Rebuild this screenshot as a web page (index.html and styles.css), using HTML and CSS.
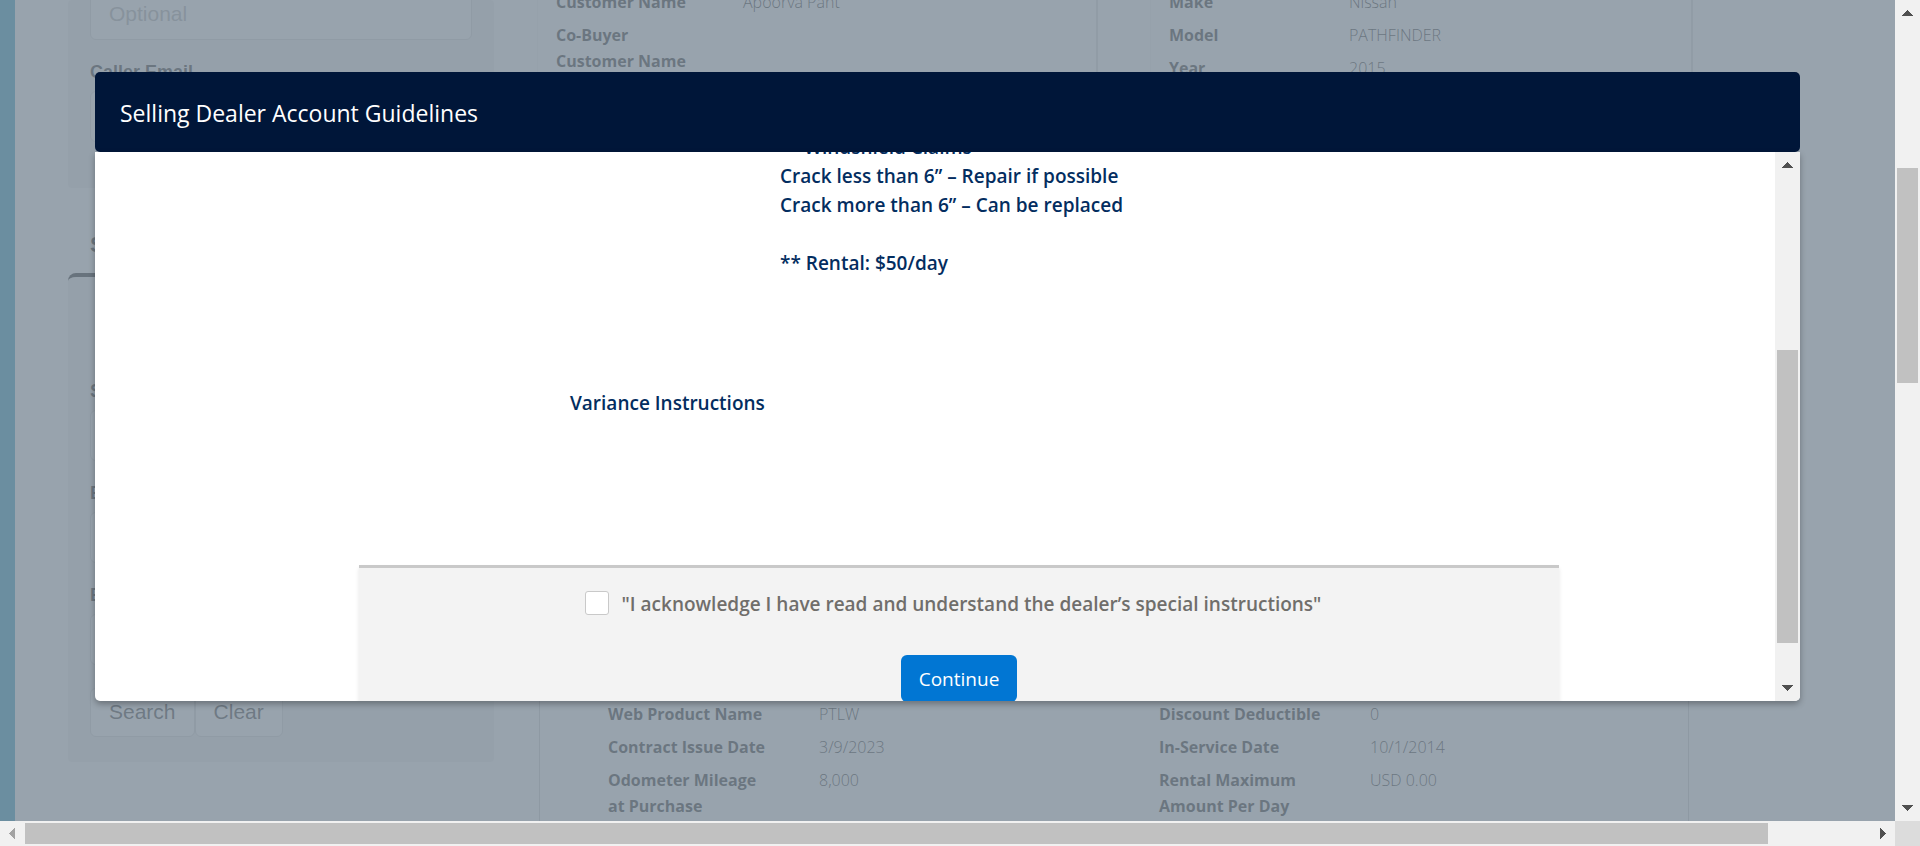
FILE: index.html
```html
<!DOCTYPE html>
<html lang="en">
<head>
<meta charset="utf-8">
<title>Selling Dealer Account Guidelines</title>
<link rel="stylesheet" href="styles.css">
</head>
<body>
<div class="window">
  <div class="viewport">
    <main class="page">
      <aside class="sidebar">
        <form class="panel panel-caller">
          <input class="field" type="text" aria-label="Caller phone" placeholder="Optional">
          <label class="label" for="email">Caller Email</label>
          <input class="field" id="email" type="text">
        </form>
        <h2 class="side-title">Search</h2>
        <form class="panel panel-search">
          <label class="label" for="s1">Search By</label>
          <input class="field" id="s1" type="text">
          <label class="label" for="s2">Enter Contract</label>
          <input class="field" id="s2" type="text">
          <label class="label" for="s3">Enter VIN</label>
          <input class="field" id="s3" type="text">
          <div class="buttons"><button type="button" class="plain">Search</button><button type="button" class="plain">Clear</button></div>
        </form>
      </aside>
      <section class="content">
        <div class="cards">
          <dl class="card card-customer">
            <div class="row"><dt>Customer Name</dt><dd>Apoorva Pant</dd></div>
            <div class="row"><dt>Co-Buyer Customer Name</dt><dd></dd></div>
          </dl>
          <dl class="card card-vehicle">
            <div class="row"><dt>Make</dt><dd>Nissan</dd></div>
            <div class="row"><dt>Model</dt><dd>PATHFINDER</dd></div>
            <div class="row"><dt>Year</dt><dd>2015</dd></div>
          </dl>
        </div>
        <div class="contract">
          <dl class="column">
            <div class="row"><dt>Web Product Name</dt><dd>PTLW</dd></div>
            <div class="row"><dt>Contract Issue Date</dt><dd>3/9/2023</dd></div>
            <div class="row"><dt>Odometer Mileage at Purchase</dt><dd>8,000</dd></div>
          </dl>
          <dl class="column">
            <div class="row"><dt>Discount Deductible</dt><dd>0</dd></div>
            <div class="row"><dt>In-Service Date</dt><dd>10/1/2014</dd></div>
            <div class="row"><dt>Rental Maximum Amount Per Day</dt><dd>USD 0.00</dd></div>
          </dl>
        </div>
      </section>
    </main>
    <div class="backdrop">
      <div class="modal" role="dialog" aria-labelledby="modal-title">
        <header class="modal-header"><h1 id="modal-title">Selling Dealer Account Guidelines</h1></header>
        <div class="modal-body">
          <div class="modal-content">
            <div class="guidelines">
              <p class="indent">Windshield Claims</p>
              <p>Crack less than 6” – Repair if possible</p>
              <p>Crack more than 6” – Can be replaced</p>
              <p class="spaced">** Rental: $50/day</p>
            </div>
            <h2 class="variance">Variance Instructions</h2>
            <footer class="ack">
              <label class="ack-label"><input type="checkbox" class="check">"I acknowledge I have read and understand the dealer’s special instructions"</label>
              <button type="button" class="continue">Continue</button>
            </footer>
          </div>
          <div class="vbar">
            <svg class="arrow" viewBox="0 0 25 25"><path d="M7 16h11l-5.500-6z"/></svg>
            <div class="track modal-track"><div class="thumb"></div></div>
            <svg class="arrow" viewBox="0 0 25 25"><path d="M7 9h11l-5.500 6z"/></svg>
          </div>
        </div>
      </div>
    </div>
  </div>
  <div class="vbar">
    <svg class="arrow" viewBox="0 0 25 25"><path d="M7 16h11l-5.500-6z"/></svg>
    <div class="track page-track"><div class="thumb"></div></div>
    <svg class="arrow" viewBox="0 0 25 25"><path d="M7 9h11l-5.500 6z"/></svg>
  </div>
  <div class="hbar">
    <svg class="arrow arrow-off" viewBox="0 0 25 25"><path d="M15 7v11l-6-5.500z"/></svg>
    <div class="track page-htrack"><div class="thumb"></div></div>
    <svg class="arrow" viewBox="0 0 25 25"><path d="M10 7v11l6-5.500z"/></svg>
  </div>
  <div class="corner"></div>
</div>
</body>
</html>
```
FILE: styles.css
```css
* { box-sizing: border-box; }
body, h1, h2, p, dl, dd { margin: 0; }
body { font-family: "Open Sans", "Noto Sans", sans-serif; overflow: hidden; }

.window { display: grid; grid-template-columns: minmax(0, 1fr) 25px; grid-template-rows: minmax(0, 1fr) 25px; height: 100vh; }
.viewport { position: relative; overflow: hidden; }

/* Page under the dialog */
.page { display: flex; height: 100%; border-left: 15px solid #1f96bc; padding: 0 202px 0 53px; background: #fff; overflow: hidden; }
.sidebar { flex: 0 0 426px; font-family: "Liberation Sans", Arial, sans-serif; color: #222; }
.panel { display: flex; flex-direction: column; padding: 0 22px; background: #f1f1f1; border-radius: 4px; }
.panel-caller { height: 188px; }
.panel-caller .field:first-child { height: 52px; margin-top: -12px; flex: none; }
.field { width: 100%; height: 51px; flex: none; border: 1px solid #d4d4d4; border-radius: 6px; padding: 0 18px; font: 21px "Liberation Sans", Arial, sans-serif; background: #fff; }
.field::placeholder { color: #aaa; opacity: 1; }
.label { font-size: 18px; font-weight: 700; line-height: 20px; margin: 22px 0 9px; }
.side-title { font-size: 22px; line-height: 26px; padding: 0 22px; margin: 44px 0 15px; }
.panel-search { border-top: 4px solid #111; border-radius: 8px 8px 4px 4px; padding: 82px 22px 25px; }
.buttons { display: flex; margin-top: 23px; }
.plain { height: 49px; padding: 0 18px 2px; border: 1px solid #d4d4d4; border-radius: 6px; background: #fff; color: #333; font: 21px "Liberation Sans", Arial, sans-serif; }

.content { flex: 1; display: flex; flex-direction: column; justify-content: space-between; margin-left: 43px; font-size: 16px; line-height: 26px; color: #222; }
.cards { display: flex; gap: 52px; height: 120px; }
.card { flex: 1; margin-top: -12px; padding-left: 18px; border: 1px solid #f4f4f4; border-right: 2px solid #ddd; }
.card-customer { flex: 0 0 561px; }
.row { display: flex; margin-bottom: 7px; }
dt { font-weight: 700; flex: 0 0 180px; padding-right: 20px; }
dd { font-weight: 300; }
.card-customer dt { flex-basis: 187px; padding-right: 40px; }
.contract { display: flex; height: 120px; margin: 0 4px 0 2px; padding: 0 68px; border: 1px solid #ccc; border-width: 0 1px; }
.column { flex: 0 0 551px; }
.column + .column { flex: 1; }
.column dt { flex-basis: 211px; padding-right: 45px; }

/* Dialog */
.backdrop { position: absolute; inset: 0; padding: 72px 95px 120px; background: rgba(126, 140, 153, 0.8); }
.modal { display: flex; flex-direction: column; height: 100%; }
.modal-header { padding: 26px 25px 24px; background: #001639; border-radius: 5px; color: #fff; }
.modal-header h1 { font-size: 23px; font-weight: 400; line-height: 30px; }
.modal-body { flex: 1; min-height: 0; display: flex; background: #fff; border-radius: 0 0 5px 5px; overflow: hidden; box-shadow: 0 3px 6px rgba(0, 0, 0, 0.3); }
.modal-content { flex: 1; display: flex; flex-direction: column; overflow: hidden; color: #032d60; font-size: 19px; line-height: 29px; font-weight: 600; }
.guidelines { margin-top: -19px; padding-left: 685px; }
.indent { padding-left: 24px; }
.spaced { margin-top: 29px; }
.variance { font: inherit; margin-top: 111px; padding-left: 475px; }
.ack { display: flex; flex-direction: column; align-items: center; flex: 0 0 190px; margin: 147px 216px 0 264px; padding-top: 22px; border-top: 3px solid #c9c9c9; background: #f3f3f3; box-shadow: 0 3px 4px rgba(0, 0, 0, 0.1); }
.ack-label { display: flex; align-items: flex-start; padding-right: 12px; color: #706e6b; }
.check { appearance: none; width: 24px; height: 24px; margin: 1px 13px 0 0; border: 1px solid #c9c9c9; border-radius: 3px; background: #fff; }
.continue { margin-top: 36px; height: 47px; padding: 0 18px; border: 0; border-radius: 6px; background: #0176d3; color: #fff; font: 400 19px "Open Sans", sans-serif; }

/* Scroll bars */
.vbar, .hbar { display: flex; background: #f1f1f1; }
.vbar { flex: 0 0 25px; flex-direction: column; padding: 0 2px; }
.hbar { padding: 2px 0; }
.track { flex: 1; display: flex; }
.vbar .track { flex-direction: column; }
.thumb { flex: 1; background: #c1c1c1; }
.arrow { flex: none; width: 25px; height: 25px; fill: #505050; shape-rendering: crispEdges; }
.vbar .arrow { margin: 0 -2px; }
.hbar .arrow { margin: -2px 0; }
.arrow.arrow-off { fill: #a3a3a3; }
.modal-track { padding: 173px 0 33px; }
.page-track { padding: 143px 0 413px; }
.page-htrack { padding-right: 102px; }
.corner { background: #dcdcdc; }
```
